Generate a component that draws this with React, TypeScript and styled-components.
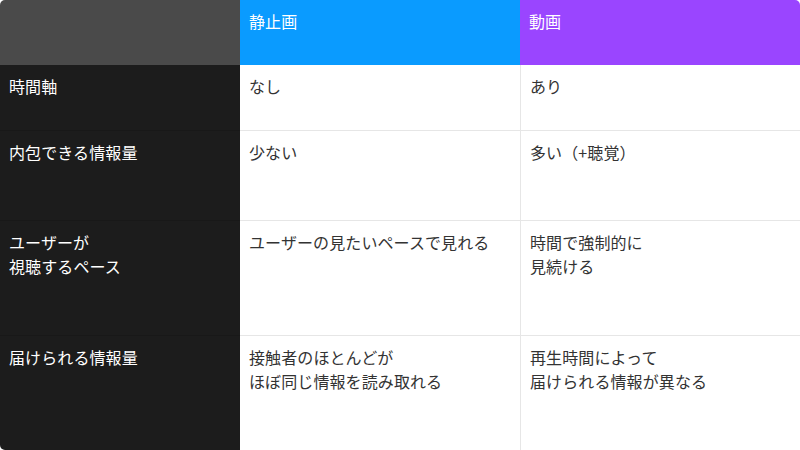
import React from "react";
import styled, { createGlobalStyle } from "styled-components";

const Global = createGlobalStyle`
  html, body { margin: 0; padding: 0; background: #ffffff; }
  body { font-family: "Noto Sans CJK JP", "Noto Sans", sans-serif; }
`;

const Table = styled.div`
  width: 800px;
  height: 450px;
  display: grid;
  grid-template-columns: 240px 280px 280px;
  grid-template-rows: 65px 65px 90px 115px 115px;
  border-radius: 5px;
  overflow: hidden;
  box-sizing: border-box;
`;

type Kind = "corner" | "still" | "video" | "label" | "body";

const bg: Record<Kind, string> = {
  corner: "#4a4a4a",
  still: "#0a9bff",
  video: "#9a45ff",
  label: "#1c1c1c",
  body: "#ffffff",
};

const Cell = styled.div<{ $kind: Kind; $top?: boolean; $left?: boolean }>`
  box-sizing: border-box;
  background: ${(p) => bg[p.$kind]};
  color: ${(p) => (p.$kind === "body" ? "#333333" : "#ffffff")};
  font-size: 16px;
  line-height: 24px;
  padding: 9px 9px;
  border-top: ${(p) =>
    p.$top ? (p.$kind === "label" ? "1px solid #181818" : "1px solid #e6e6e6") : "none"};
  border-left: ${(p) => (p.$left ? "1px solid #e6e6e6" : "none")};
  white-space: pre-line;
  letter-spacing: 0.1px;
`;

const rows: [string, string, string][] = [
  ["時間軸", "なし", "あり"],
  ["内包できる情報量", "少ない", "多い（+聴覚）"],
  ["ユーザーが\n視聴するペース", "ユーザーの見たいペースで見れる", "時間で強制的に\n見続ける"],
  ["届けられる情報量", "接触者のほとんどが\nほぼ同じ情報を読み取れる", "再生時間によって\n届けられる情報が異なる"],
];

export default function App() {
  return (
    <>
      <Global />
      <Table>
        <Cell $kind="corner" />
        <Cell $kind="still">静止画</Cell>
        <Cell $kind="video">動画</Cell>
        {rows.map((r, i) => (
          <React.Fragment key={i}>
            <Cell $kind="label" $top={i > 0}>{r[0]}</Cell>
            <Cell $kind="body" $top={i > 0}>{r[1]}</Cell>
            <Cell $kind="body" $top={i > 0} $left>{r[2]}</Cell>
          </React.Fragment>
        ))}
      </Table>
    </>
  );
}
